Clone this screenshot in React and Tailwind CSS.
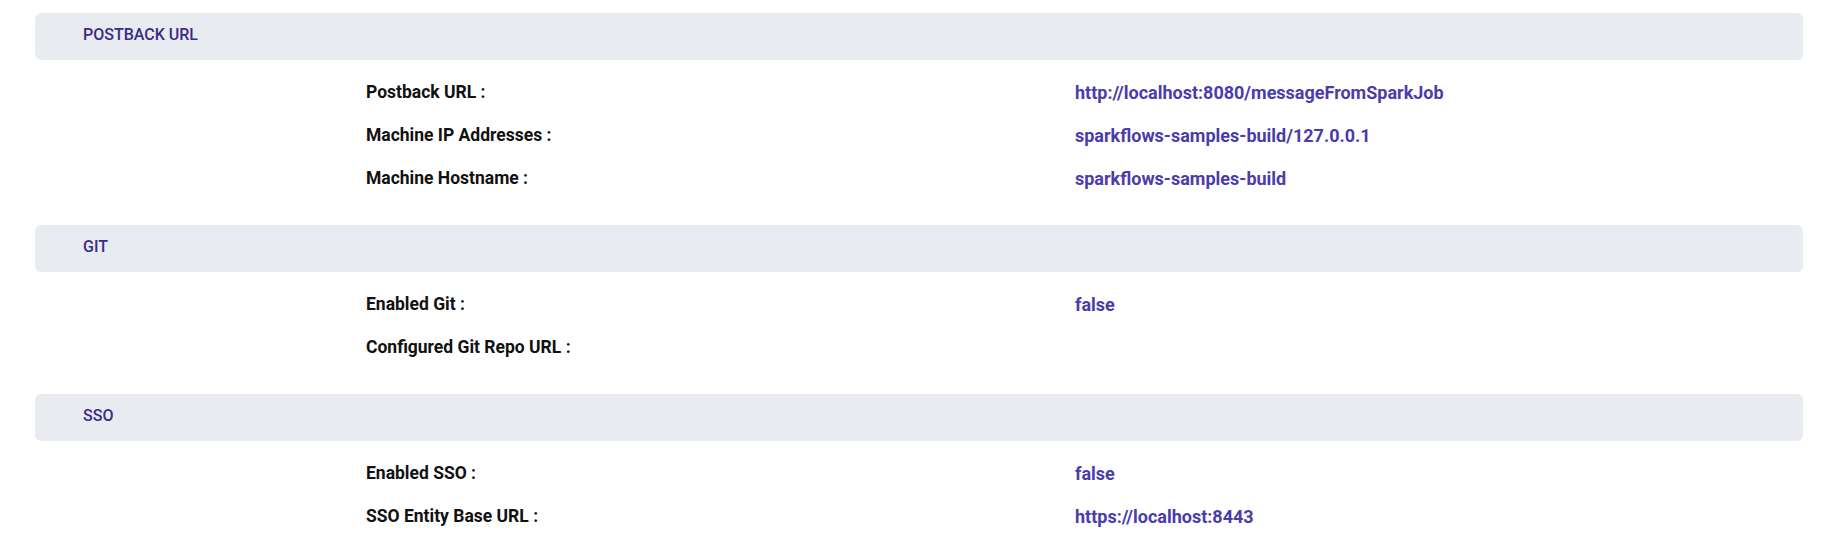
const SECTIONS = [
  {
    title: 'POSTBACK URL',
    rows: [
      ['Postback URL :', 'http://localhost:8080/messageFromSparkJob'],
      ['Machine IP Addresses :', 'sparkflows-samples-build/127.0.0.1'],
      ['Machine Hostname :', 'sparkflows-samples-build'],
    ],
  },
  {
    title: 'GIT',
    rows: [
      ['Enabled Git :', 'false'],
      ['Configured Git Repo URL :', ''],
    ],
  },
  {
    title: 'SSO',
    rows: [
      ['Enabled SSO :', 'false'],
      ['SSO Entity Base URL :', 'https://localhost:8443'],
    ],
  },
]

function Section({ title, rows }) {
  return (
    <section>
      <div className="flex h-[47px] items-center rounded-md bg-[#e8ebef] pb-[4px] pl-[48px]">
        <h2 className="text-[16px] font-medium text-[#3b2a86]">{title}</h2>
      </div>
      <div className="pt-[11px] pb-[25px] pl-[331px]">
        {rows.map(([label, value]) => (
          <div key={label} className="grid h-[43px] grid-cols-[709px_1fr] items-center font-bold">
            <span className="text-[17.5px] text-[#111]">{label}</span>
            <span className="text-[18px] text-[#4a3cab]">{value}</span>
          </div>
        ))}
      </div>
    </section>
  )
}

export default function App() {
  return (
    <div className="min-h-screen bg-white pl-[35px] pr-[29px] pt-[13px] font-['Roboto',_'Liberation_Sans',_sans-serif]">
      {SECTIONS.map((s) => (
        <Section key={s.title} {...s} />
      ))}
    </div>
  )
}
